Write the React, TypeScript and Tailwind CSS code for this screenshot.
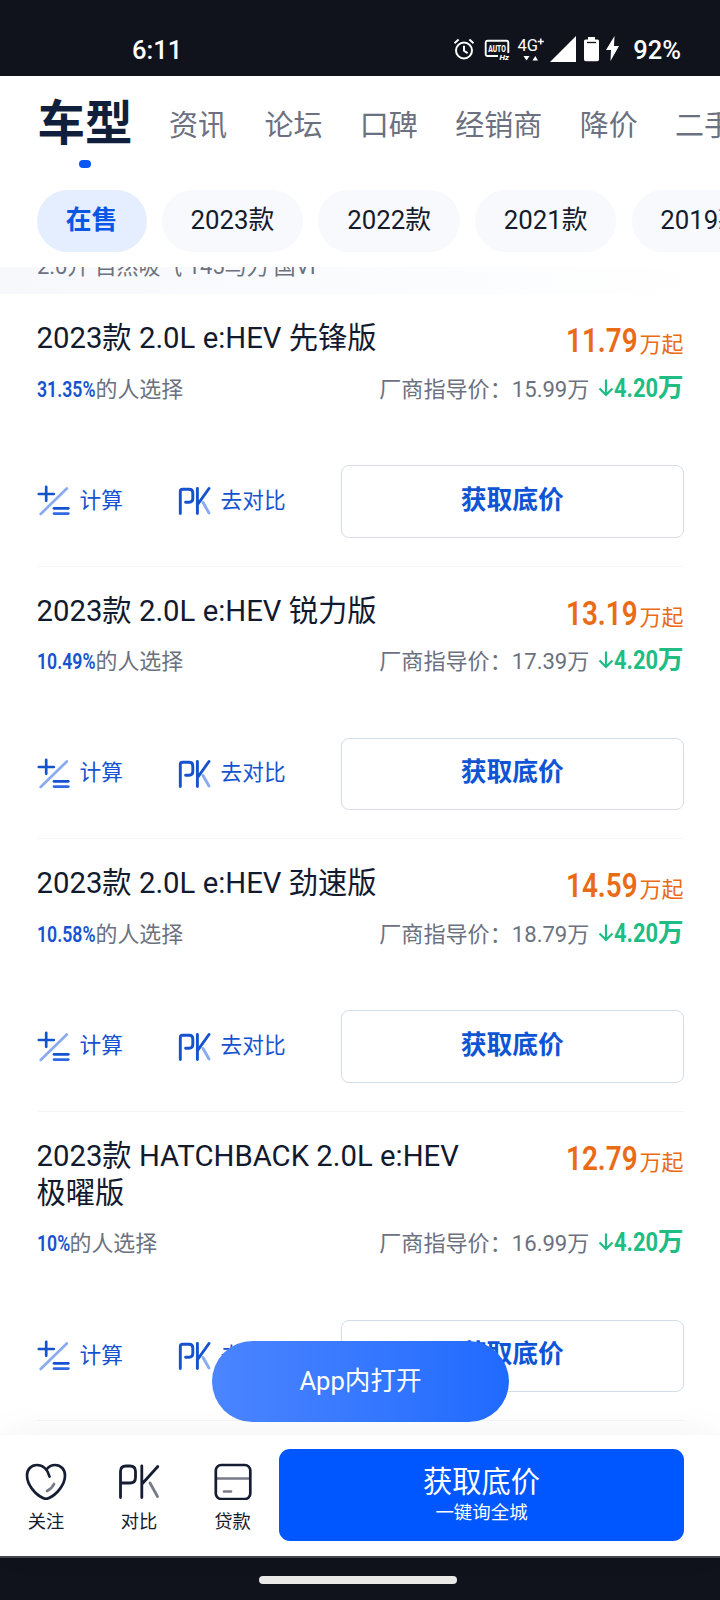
import clsx from 'clsx';

type CarModel = {
  name: string;
  percent: string;
  price: string;
  guidePrice: string;
  discount: string;
};

const tabs = ['资讯', '论坛', '口碑', '经销商', '降价', '二手车'];

const years = ['在售', '2023款', '2022款', '2021款', '2019款'];

const models: CarModel[] = [
  { name: '2023款 2.0L e:HEV 先锋版', percent: '31.35%', price: '11.79', guidePrice: '15.99万', discount: '4.20' },
  { name: '2023款 2.0L e:HEV 锐力版', percent: '10.49%', price: '13.19', guidePrice: '17.39万', discount: '4.20' },
  { name: '2023款 2.0L e:HEV 劲速版', percent: '10.58%', price: '14.59', guidePrice: '18.79万', discount: '4.20' },
  { name: '2023款 HATCHBACK 2.0L e:HEV 极曜版', percent: '10%', price: '12.79', guidePrice: '16.99万', discount: '4.20' },
];

function StatusBar() {
  return (
    <div className="flex h-[76px] shrink-0 items-start bg-[#10131b] pl-[132px] pr-[39px] pt-[35px] text-[25.5px] font-medium leading-[30px] text-white">
      <span>6:11</span>
      <div className="ml-auto flex items-start">
        {/* Alarm */}
        <svg viewBox="0 0 22 22" className="mt-[3px] h-[22px] w-[22px]" fill="none" stroke="white" strokeWidth="2">
          <circle cx="11" cy="12.5" r="8" />
          <path d="M11 7.8v5l3.6 2.4M1.5 5.2 5.6 1.6M20.5 5.2 16.4 1.6" />
        </svg>
        {/* Auto refresh rate */}
        <svg viewBox="0 0 26 22" className="ml-[9px] mt-[4px] h-[22px] w-[26px]">
          <path d="M14 17H3.5a1.8 1.8 0 0 1-1.8-1.8V3.5a1.8 1.8 0 0 1 1.8-1.8h19a1.8 1.8 0 0 1 1.8 1.8V14" fill="none" stroke="white" strokeWidth="1.9" />
          <text x="13" y="12.5" textAnchor="middle" textLength="17.5" lengthAdjust="spacingAndGlyphs" fontSize="8.5" fontWeight="800" fill="white">AUTO</text>
          <text x="15.5" y="21.3" textLength="9.5" lengthAdjust="spacingAndGlyphs" fontSize="8" fontWeight="800" fontStyle="italic" fill="white">Hz</text>
        </svg>
        {/* Mobile network */}
        <svg viewBox="0 0 28 26" className="ml-[7px] mt-px h-[26px] w-[28px]" fill="white">
          <text x="0.5" y="15" textLength="20.5" lengthAdjust="spacingAndGlyphs" fontSize="17" fontWeight="400">4G</text>
          <path d="M23.8 2.5v6M20.8 5.5h6" stroke="white" strokeWidth="1.5" />
          <path d="M6.5 20h6l-3 4.5zM15.5 24.5h5.5l-2.7-4.5z" />
        </svg>
        <svg viewBox="0 0 26 26" className="ml-[5px] mt-px h-[26px] w-[26px]" fill="white">
          <path d="M26 0v26H0z" />
        </svg>
        <svg viewBox="0 0 15 25" className="ml-[8px] mt-[2px] h-[25px] w-[15px]" fill="white">
          <path d="M4 0h7v2.5h2.5A1.5 1.5 0 0 1 15 4v18.5a1.8 1.8 0 0 1-1.8 1.8H1.8A1.8 1.8 0 0 1 0 22.5V4a1.5 1.5 0 0 1 1.5-1.5H4z" />
          <path d="M3 5.5h9" stroke="#10131b" strokeWidth="1.3" />
        </svg>
        <svg viewBox="0 0 13 25" className="ml-[7px] mt-px h-[25px] w-[13px]" fill="white">
          <path d="M8.5 0 0 14h5L4.5 25 13 10H8z" />
        </svg>
        <span className="ml-[14px]">92%</span>
      </div>
    </div>
  );
}

function TabBar() {
  return (
    <div className="flex h-[114px] shrink-0 overflow-hidden pl-[38px] text-[29px] text-[#6b7180]">
      <div className="flex w-[93px] shrink-0 flex-col items-center">
        <h1 className="ml-px mt-[18px] whitespace-nowrap text-[47.5px] font-bold leading-[60px] text-[#101f3c]">车型</h1>
        <i className="mt-[6px] h-[8px] w-[12px] rounded-full bg-[#0a57f5]" />
      </div>
      <div className="ml-[38px] mt-[30px] flex gap-[37.4px] whitespace-nowrap leading-[40px]">
        {tabs.map((tab) => (
          <span key={tab}>{tab}</span>
        ))}
      </div>
    </div>
  );
}

function YearFilter() {
  return (
    <div className="flex h-[77px] shrink-0 gap-[15.3px] overflow-hidden pl-[36.5px]">
      {years.map((year, i) => (
        <button
          key={year}
          className={clsx(
            'h-[62px] shrink-0 rounded-full pb-[2px] text-[25.8px] leading-[60px]',
            i === 0 ? 'w-[110px] bg-[#e4eefe] font-bold text-[#0a57e6]' : 'w-[141.3px] bg-[#f7f9fd] text-[#141b2d]'
          )}
        >
          {year}
        </button>
      ))}
    </div>
  );
}

function CalcIcon() {
  return (
    <svg viewBox="0 0 33 32" className="h-[32px] w-[33px]" fill="none" strokeWidth="2.7" strokeLinecap="round">
      <path d="M29.8 3.5 3.7 29" stroke="#8aabf0" />
      <path d="M9.2 1.8v14M1.8 9h15" stroke="#1552cf" />
      <path d="M17 23.3h14.3" stroke="#1552cf" />
      <path d="M17 28.6h14.3" stroke="#2f6ae3" />
    </svg>
  );
}

function PkIcon() {
  return (
    <svg viewBox="0 0 33 30" className="h-[30px] w-[33px]" fill="none" strokeWidth="2.9" strokeLinecap="round" strokeLinejoin="round">
      <path d="M25 16.5 31 27" stroke="#8aabf0" />
      <path d="M2.3 27.5V5.500Q2.300 3.200 4.600 3.200h6.500Q14.800 3.200 14.800 7v5.500q0 3.700-3.700 3.700H7.600" stroke="#1552cf" />
      <path d="M19.4 2.500v25M31 2.500 19.600 18.500" stroke="#1552cf" />
    </svg>
  );
}

function ModelCard({ model }: { model: CarModel }) {
  return (
    <div className="mx-[36.5px] border-b border-[#f5f6f8] pb-[27.8px] pt-[26px]">
      <div className="flex items-start justify-between">
        <h2 className="w-[440px] text-[29.3px] leading-[36.9px] text-[#111a2e]">{model.name}</h2>
        <div className="flex h-[36.9px] items-baseline whitespace-nowrap text-[#ea6b16] leading-[41px]">
          <span className="inline-block w-[73px] origin-left scale-x-[0.82] text-[34px] font-semibold">{model.price}</span>
          <span className="text-[22px]">万起</span>
        </div>
      </div>
      <div className="mt-[15.8px] flex h-[30px] items-baseline justify-between whitespace-nowrap text-[22.1px] leading-[30px] text-[#6b7180]">
        <div className="flex items-baseline">
          <span className={clsx('inline-block origin-left scale-x-[0.8] font-semibold text-[#1552cf]', model.percent.length > 3 ? 'w-[59px]' : 'w-[33px]')}>
            {model.percent}
          </span>
          <span className="text-[21.9px]">的人选择</span>
        </div>
        <div className="flex items-baseline">
          <span>厂商指导价：{model.guidePrice}</span>
          <span className="ml-[9px] flex items-baseline text-[25.8px] font-bold text-[#1dbd84]">
            <svg viewBox="0 0 16 19" className="h-[19px] w-[16px]" fill="none" stroke="currentColor" strokeWidth="2.2">
              <path d="M8 1.5v15M1.5 10.5 8 17l6.5-6.5" />
            </svg>
            <span className="inline-block w-[43.3px] origin-left scale-x-[0.85]">{model.discount}</span>
            <span>万</span>
          </span>
        </div>
      </div>
      <div className="mt-[62.3px] flex h-[72.8px] items-center text-[21.7px] text-[#1552cf]">
        <CalcIcon />
        <span className="ml-[10px] w-[98px] pb-px leading-[30px]">计算</span>
        <PkIcon />
        <span className="ml-[10px] pb-px leading-[30px]">去对比</span>
        <button className="ml-auto h-full w-[342.5px] rounded-[8px] border-[1.5px] border-[#d3ddea] pb-[3px] text-[25.8px] font-bold text-[#1054d6]">
          获取底价
        </button>
      </div>
    </div>
  );
}

function BottomBar() {
  return (
    <div className="relative flex h-[121.5px] shrink-0 bg-white pr-[36px] shadow-[0_-4px_36px_-4px_rgba(0,0,0,0.06)]">
      <div className="flex flex-1 pt-[27px] text-[18.3px] leading-[24px] text-[#141b2d]">
        <div className="flex w-[92px] flex-col items-center">
          <svg viewBox="0 0 42 38" className="h-[38px] w-[42px]" fill="none" strokeWidth="2.7" strokeLinecap="round" strokeLinejoin="round">
            <path d="M24.500 14.500C22.500 7 17.500 3 12 3 6 3 2 7.500 2 13.500c0 9 8 19 16.500 22.700 1.700.8 3.300.8 5 0C32 32.500 40 22.500 40 13.500 40 7.500 36 3 30 3c-4 0-6.500 1.800-8.500 4.500" stroke="#141d31" />
            <path d="M29 22c-1.500 3.300-3.500 5.300-7 7" stroke="#777a88" />
          </svg>
          <span className="mt-[10px]">关注</span>
        </div>
        <div className="flex w-[94px] flex-col items-center">
          <svg viewBox="0 0 42 38" className="h-[38px] w-[42px]" fill="none" strokeWidth="2.8" strokeLinecap="round" strokeLinejoin="round">
            <path d="M32 21 39.500 34.500" stroke="#777a88" />
            <path d="M2.500 35.500V9.500Q2.500 4 8 4h4Q17.500 4 17.500 9.500v6Q17.500 21 12 21H2.500" stroke="#141d31" />
            <path d="M23.800 4v31.500M39.800 4.500 24 22" stroke="#141d31" />
          </svg>
          <span className="mt-[10px]">对比</span>
        </div>
        <div className="flex w-[93px] flex-col items-center">
          <svg viewBox="0 0 38 38" className="h-[38px] w-[38px]" fill="none" strokeWidth="2.7" strokeLinecap="round">
            <path d="M2.500 16.500h33M10 29.500h7" stroke="#777a88" />
            <rect x="1.800" y="3" width="34.500" height="34" rx="5.500" stroke="#141d31" />
          </svg>
          <span className="mt-[10px]">贷款</span>
        </div>
      </div>
      <button className="mt-[14.5px] flex h-[91.5px] w-[405px] flex-col items-center rounded-[11px] bg-[#0056ff] text-white">
        <span className="mt-[12.500px] text-[29.3px] leading-[40px]">获取底价</span>
        <span className="text-[18.46px] leading-[23px]">一键询全城</span>
      </button>
    </div>
  );
}

export default function App() {
  return (
    <div className="relative flex h-[1600px] w-[720px] flex-col overflow-hidden bg-white font-[Roboto,'Noto_Sans_CJK_SC',sans-serif]">
      <StatusBar />
      <TabBar />
      <YearFilter />
      <div className="min-h-0 flex-1 overflow-hidden">
        {/* Engine group heading, scrolled under the filter row */}
        <div className="flex h-[27px] items-end overflow-hidden bg-linear-to-r from-[#f6f8fc] to-white pb-[12.5px] pl-[37px] text-[21.9px] leading-[30px] text-[#6b7180]">
          2.0升 自然吸气 145马力 国VI
        </div>
        {models.map((model) => (
          <ModelCard key={model.name} model={model} />
        ))}
      </div>
      <BottomBar />
      <div className="flex h-[44px] shrink-0 justify-center border-t-2 border-[#45484e] bg-[#10131b] pr-[4px] pt-[18px]">
        <div className="h-[8px] w-[198px] rounded-full bg-[#ebe9e8]" />
      </div>
      <button className="absolute left-[212px] top-[1341px] h-[80.5px] w-[297px] rounded-full bg-linear-to-r from-[#4b85ff] to-[#1f6aff] text-[25.6px] text-white">
        App内打开
      </button>
    </div>
  );
}
